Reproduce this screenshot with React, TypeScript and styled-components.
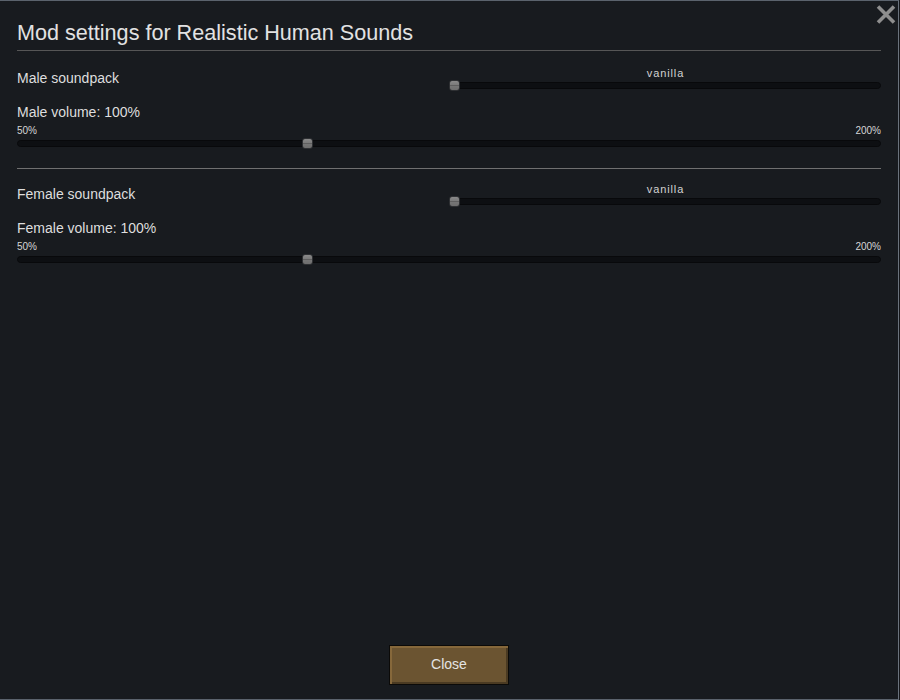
import React from "react";
import styled, { createGlobalStyle } from "styled-components";

const Global = createGlobalStyle`
  html, body { margin: 0; padding: 0; background: #16181c; }
  body { font-family: "Liberation Sans", Arial, sans-serif; }
`;

const Window = styled.div`
  position: relative;
  box-sizing: border-box;
  width: 899px;
  height: 700px;
  background: #181b1f;
  border-top: 1px solid #5b636d;
  border-right: 1px solid #6a727c;
  border-bottom: 1px solid #5b636d;
  display: flex;
  flex-direction: column;
  padding: 0 17px 0 17px;
`;

const CloseX = styled.button`
  position: absolute;
  top: 3px;
  right: 2px;
  width: 20px;
  height: 20px;
  padding: 0;
  border: 0;
  background: transparent;
  display: flex;
  align-items: center;
  justify-content: center;
`;

const Title = styled.h1`
  margin: 17px 0 0 0;
  height: 30px;
  font-size: 21.6px;
  line-height: 30px;
  font-weight: normal;
  color: #e2e2e2;
  white-space: nowrap;
`;

const Rule = styled.div<{ $gap: number; $tone: string }>`
  margin-top: ${(p) => p.$gap}px;
  height: 1px;
  width: 864px;
  background: ${(p) => p.$tone};
`;

const Section = styled.div<{ $gap: number }>`
  margin-top: ${(p) => p.$gap}px;
  display: flex;
  flex-direction: column;
  width: 864px;
`;

const PackRow = styled.div`
  display: flex;
  height: 24px;
`;

const Label = styled.div`
  font-size: 14px;
  line-height: 20px;
  height: 20px;
  color: #dedede;
  white-space: nowrap;
`;

const PackLabel = styled(Label)`
  margin-top: 1px;
  width: 433px;
`;

const SliderBox = styled.div`
  flex: 1;
  display: flex;
  flex-direction: column;
`;

const Caption = styled.div`
  font-size: 11px;
  line-height: 12px;
  height: 12px;
  letter-spacing: 0.9px;
  text-align: center;
  color: #d2d2d2;
`;

const TrackArea = styled.div`
  position: relative;
  margin-top: 1px;
  height: 11px;
  display: flex;
  align-items: center;
`;

const Track = styled.div`
  flex: 1;
  height: 7px;
  box-sizing: border-box;
  border-radius: 4px;
  background: #0d0f12;
  border: 1px solid #08090b;
`;

const Handle = styled.div`
  position: absolute;
  top: 0;
  width: 11px;
  height: 11px;
  box-sizing: border-box;
  border-radius: 3px;
  border: 1px solid #2e3033;
  background: linear-gradient(#8a8a8a 0%, #7a7a7a 45%, #5f5f5f 50%, #767676 56%, #6e6e6e 100%);
`;

const VolumeLabel = styled(Label)`
  margin-top: 11px;
`;

const RangeRow = styled.div`
  margin-top: 3px;
  display: flex;
  justify-content: space-between;
  font-size: 10px;
  line-height: 12px;
  height: 12px;
  color: #d6d6d6;
`;

const VolumeTrack = styled(TrackArea)`
  margin-top: 1px;
`;

const Footer = styled.div`
  margin-top: auto;
  margin-bottom: 14px;
  display: flex;
  justify-content: center;
  margin-left: -17px;
  margin-right: -17px;
`;

const Button = styled.button`
  box-sizing: border-box;
  width: 120px;
  height: 40px;
  border: 1px solid #0b0a08;
  box-shadow: inset 2px 2px 0 #86683b, inset -2px -2px 0 #4a3a22;
  background: #6b5431;
  color: #e4e4e4;
  font-family: "Liberation Sans", Arial, sans-serif;
  font-size: 14px;
  line-height: 16px;
  padding: 0 0 2px 0;
`;

type SectionProps = { gap: number; pack: string; volume: string; value: number };

function Settings({ gap, pack, volume, value }: SectionProps) {
  const frac = (value - 50) / 150;
  return (
    <Section $gap={gap}>
      <PackRow>
        <PackLabel>{pack}</PackLabel>
        <SliderBox>
          <Caption>vanilla</Caption>
          <TrackArea>
            <Track />
            <Handle style={{ left: -1 }} />
          </TrackArea>
        </SliderBox>
      </PackRow>
      <VolumeLabel>{volume}: {value}%</VolumeLabel>
      <RangeRow>
        <span>50%</span>
        <span>200%</span>
      </RangeRow>
      <VolumeTrack>
        <Track />
        <Handle style={{ left: Math.round(frac * 864) - 3 }} />
      </VolumeTrack>
    </Section>
  );
}

export default function App() {
  return (
    <>
      <Global />
      <Window>
        <CloseX aria-label="close">
          <svg width="20" height="19" viewBox="0 0 20 19">
            <path d="M2 1.5 L18 17.5 M18 1.5 L2 17.5" stroke="#8e8e8e" strokeWidth="3.6" strokeLinecap="butt" />
          </svg>
        </CloseX>
        <Title>Mod settings for Realistic Human Sounds</Title>
        <Rule $gap={2} $tone="#565656" />
        <Settings gap={16} pack="Male soundpack" volume="Male volume" value={100} />
        <Rule $gap={19} $tone="#707070" />
        <Settings gap={14} pack="Female soundpack" volume="Female volume" value={100} />
        <Footer>
          <Button>Close</Button>
        </Footer>
      </Window>
    </>
  );
}
